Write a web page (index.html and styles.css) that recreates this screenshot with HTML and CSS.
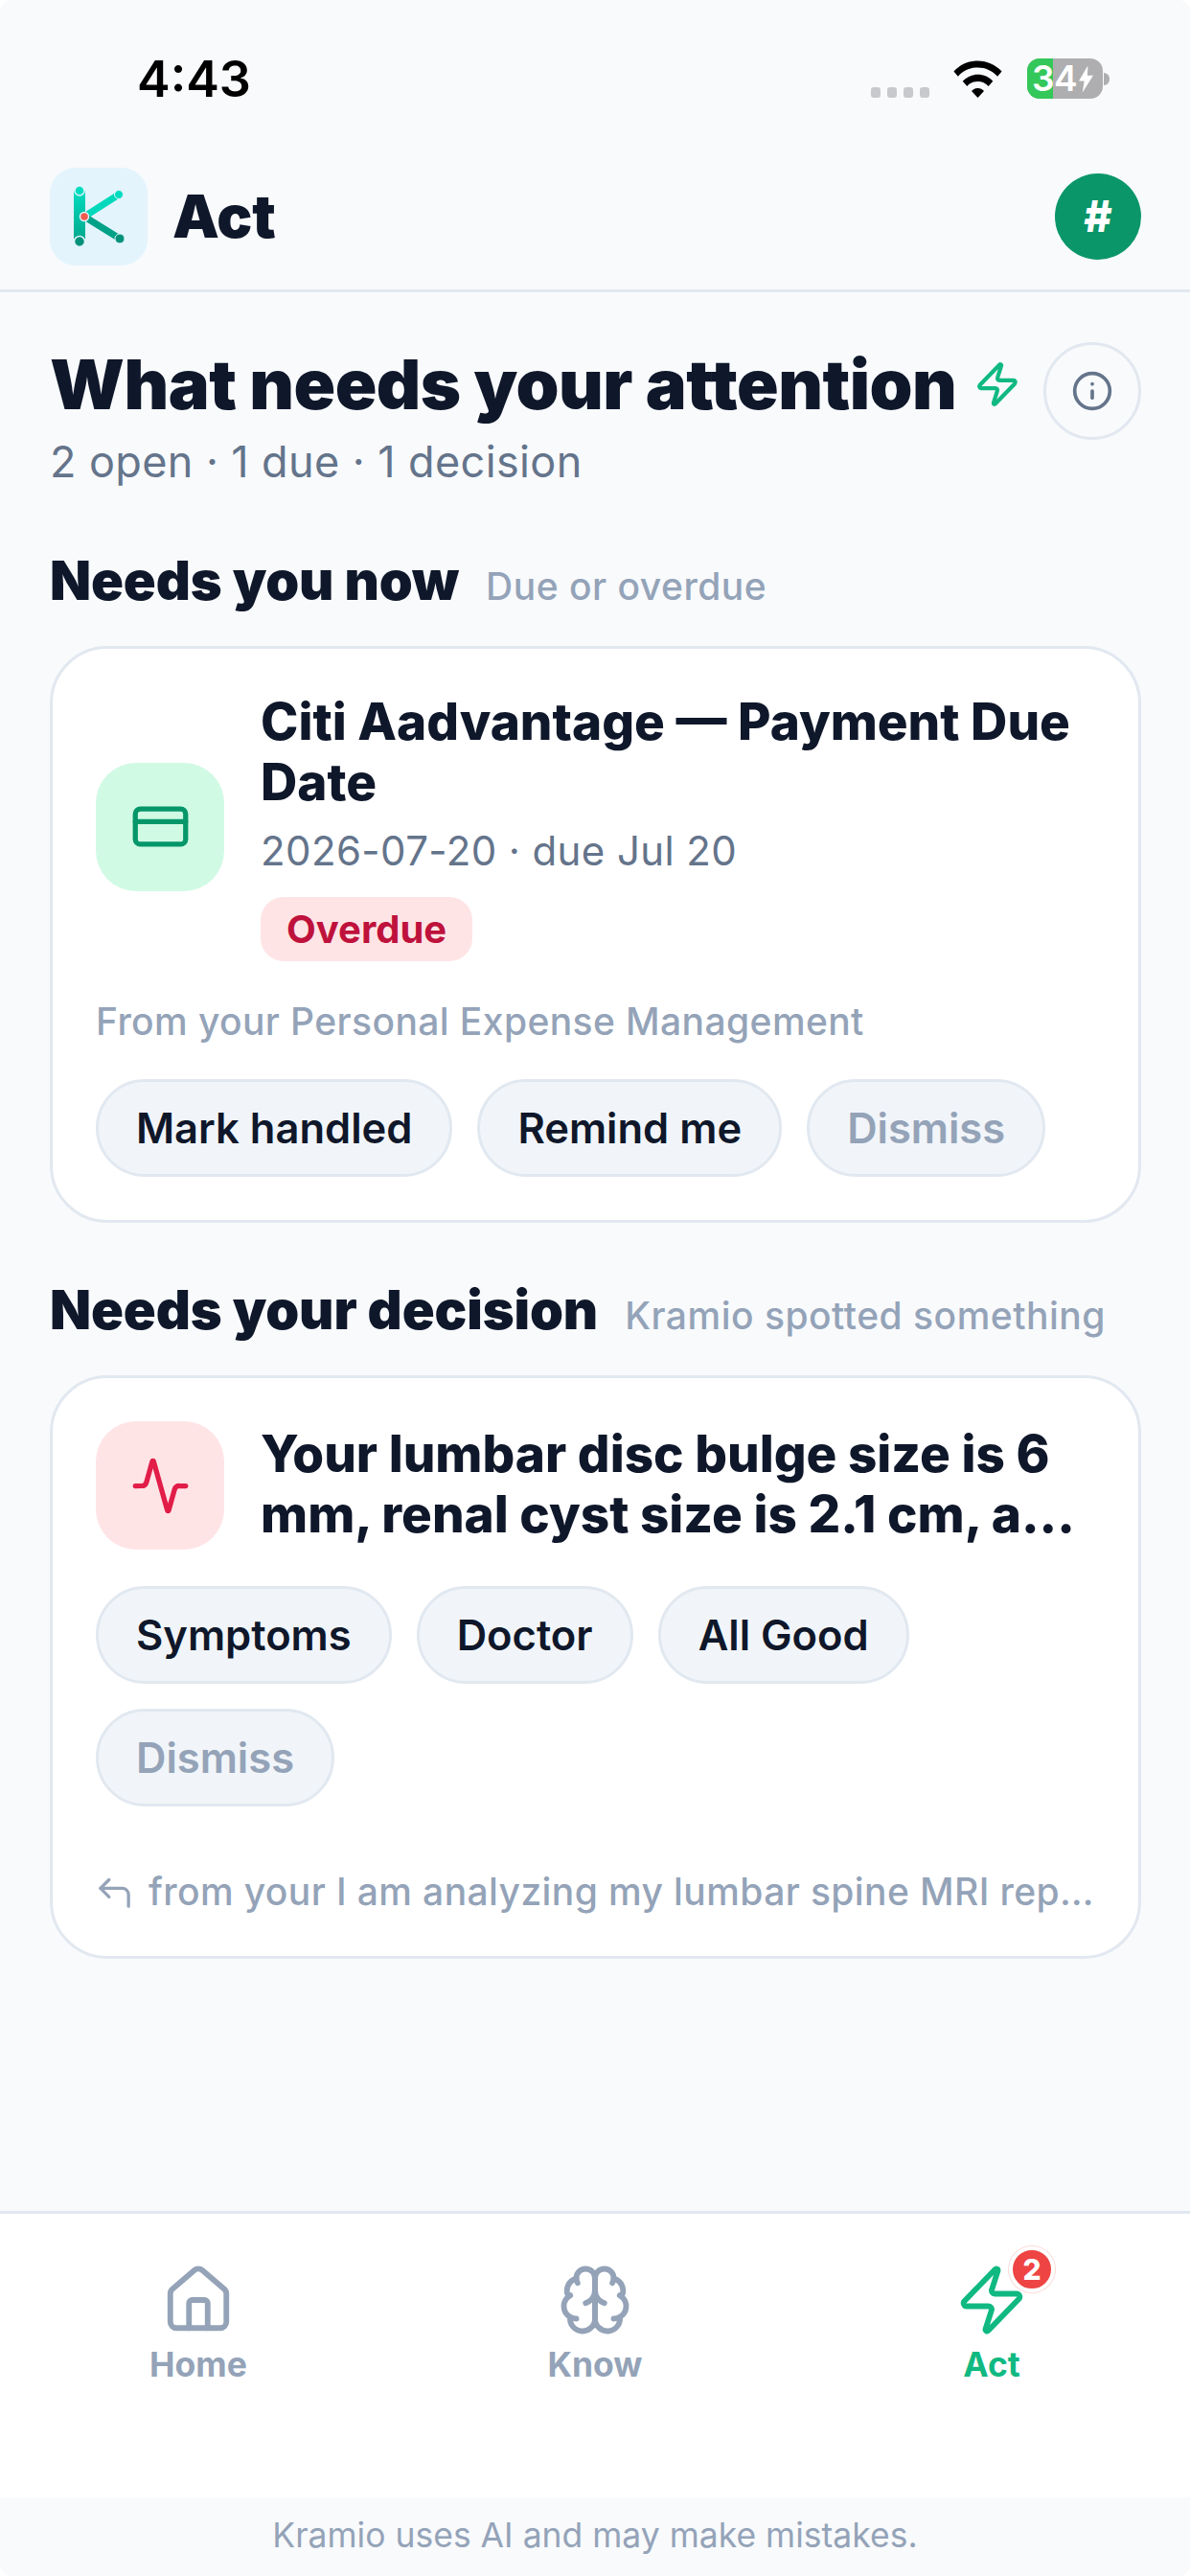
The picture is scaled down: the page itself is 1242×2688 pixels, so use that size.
FILE: index.html
```html
<!DOCTYPE html>
<html lang="en">
<head>
    <meta charset="UTF-8">
    <meta name="viewport" content="width=device-width, initial-scale=1.0">
    <title>Act</title>
    <link rel="stylesheet" href="styles.css">
</head>
<body>

<div class="app">
    <div class="status-bar">
        <span class="status-time">4:43</span>
        <div class="status-icons">
            <div class="signal"><i></i><i></i><i></i><i></i></div>
            <svg class="wifi" viewBox="0 0 54 42">
                <path d="M0 12.5C7 4.8 16.5 0.5 27 0.5S47 4.8 54 12.5L49.2 18C43.4 11.6 35.6 8 27 8S10.600 11.600 4.800 18Z" fill="#000"/>
                <path d="M10 23.500C14.400 18.600 20.400 16 27 16S39.600 18.600 44 23.500L39 29C36 25.600 31.700 23.600 27 23.600S18 25.600 15 29Z" fill="#000"/>
                <path d="M20 34.500C21.800 32.400 24.300 31.300 27 31.300S32.200 32.400 34 34.500L27 42Z" fill="#000"/>
            </svg>
            <div class="battery">
                <div class="battery-body">
                    <div class="battery-fill"></div>
                    <span class="battery-num">34</span>
                    <svg class="battery-bolt" viewBox="0 0 16 30"><path d="M10 0L0 17h6L4 30 16 11H9.500Z" fill="#fff"/></svg>
                </div>
                <div class="battery-cap"></div>
            </div>
        </div>
    </div>

    <header class="top-bar">
        <div class="logo">
            <svg viewBox="0 0 102 102">
                <defs>
                    <linearGradient id="kgrad" x1="0" y1="0" x2="0" y2="1">
                        <stop offset="0" stop-color="#00dcc0"/>
                        <stop offset="1" stop-color="#00a58a"/>
                    </linearGradient>
                </defs>
                <rect x="25" y="24" width="12" height="54" fill="url(#kgrad)"/>
                <path d="M36 51L72 28" stroke="#00d8bb" stroke-width="7"/>
                <path d="M36 51L73 74" stroke="#00a287" stroke-width="7"/>
                <circle cx="31" cy="24" r="5" fill="#00dcc0" stroke="#e3f4fd" stroke-width="1.500"/>
                <circle cx="31" cy="77" r="5.500" fill="#00917a" stroke="#e3f4fd" stroke-width="1.500"/>
                <circle cx="72" cy="28" r="4.500" fill="#00dcc0" stroke="#e3f4fd" stroke-width="1"/>
                <circle cx="73" cy="74" r="5" fill="#00917a" stroke="#e3f4fd" stroke-width="1"/>
                <circle cx="36" cy="51" r="4.500" fill="#ef5b4c" stroke="#e3f4fd" stroke-width="1.500"/>
            </svg>
        </div>
        <span class="top-title">Act</span>
        <div class="avatar">#</div>
    </header>

    <main class="content">
        <div class="page-head">
            <div class="page-head-text">
                <div class="page-title-row">
                    <h1 class="page-title">What needs your attention</h1>
                    <svg class="icon title-zap" viewBox="0 0 24 24"><path d="M4 14a1 1 0 0 1-.78-1.630l9.900-10.200a.5.5 0 0 1 .86.46l-1.920 6.020A1 1 0 0 0 13 10h7a1 1 0 0 1 .78 1.630l-9.900 10.200a.5.5 0 0 1-.86-.46l1.920-6.020A1 1 0 0 0 11 14z"/></svg>
                </div>
                <p class="page-sub">2 open · 1 due · 1 decision</p>
            </div>
            <div class="info-button">
                <svg class="icon" viewBox="0 0 24 24"><circle cx="12" cy="12" r="10"/><path d="M12 16v-4"/><path d="M12 8h.01"/></svg>
            </div>
        </div>

        <section class="section">
            <div class="section-head">
                <h2 class="section-title">Needs you now</h2>
                <span class="section-note">Due or overdue</span>
            </div>
            <div class="card">
                <div class="card-top">
                    <div class="card-icon card-icon-green">
                        <svg class="icon" viewBox="0 0 24 24"><rect x="2" y="5" width="20" height="14" rx="2"/><path d="M2 10h20"/></svg>
                    </div>
                    <div class="card-body">
                        <div class="card-title">Citi Aadvantage — Payment Due Date</div>
                        <div class="card-meta">2026-07-20 · due Jul 20</div>
                        <span class="badge">Overdue</span>
                    </div>
                </div>
                <div class="card-source">From your Personal Expense Management</div>
                <div class="actions">
                    <span class="pill">Mark handled</span>
                    <span class="pill">Remind me</span>
                    <span class="pill pill-muted">Dismiss</span>
                </div>
            </div>
        </section>

        <section class="section">
            <div class="section-head">
                <h2 class="section-title">Needs your decision</h2>
                <span class="section-note">Kramio spotted something</span>
            </div>
            <div class="card">
                <div class="card-top card-top-start">
                    <div class="card-icon card-icon-red">
                        <svg class="icon" viewBox="0 0 24 24"><path d="M22 12h-2.480a2 2 0 0 0-1.930 1.460l-2.350 8.360a.25.25 0 0 1-.48 0L9.240 2.180a.25.25 0 0 0-.48 0l-2.350 8.360A2 2 0 0 1 4.490 12H2"/></svg>
                    </div>
                    <div class="card-body">
                        <div class="card-title card-title-offset">Your lumbar disc bulge size is 6 mm, renal cyst size is 2.1 cm, a...</div>
                    </div>
                </div>
                <div class="actions actions-decision">
                    <span class="pill">Symptoms</span>
                    <span class="pill">Doctor</span>
                    <span class="pill">All Good</span>
                    <span class="pill pill-muted">Dismiss</span>
                </div>
                <div class="card-origin">
                    <svg class="icon" viewBox="0 0 24 24"><path d="M8.500 4L3 9.500 8.500 15"/><path d="M3 9.500H17a4 4 0 0 1 4 4V21"/></svg>
                    <span class="card-origin-text">from your I am analyzing my lumbar spine MRI rep…</span>
                </div>
            </div>
        </section>
    </main>

    <nav class="tab-bar">
        <div class="tab">
            <svg class="icon" viewBox="0 0 24 24"><path d="M15 21v-8a1 1 0 0 0-1-1h-4a1 1 0 0 0-1 1v8"/><path d="M3 10a2 2 0 0 1 .709-1.528l7-5.999a2 2 0 0 1 2.582 0l7 5.999A2 2 0 0 1 21 10v9a2 2 0 0 1-2 2H5a2 2 0 0 1-2-2z"/></svg>
            <span>Home</span>
        </div>
        <div class="tab">
            <svg class="icon" viewBox="0 0 24 24"><path d="M12 5a3 3 0 1 0-5.997.125 4 4 0 0 0-2.526 5.770 4 4 0 0 0 .556 6.588A4 4 0 1 0 12 18Z"/><path d="M12 5a3 3 0 1 1 5.997.125 4 4 0 0 1 2.526 5.770 4 4 0 0 1-.556 6.588A4 4 0 1 1 12 18Z"/><path d="M15 13a4.500 4.500 0 0 1-3-4 4.500 4.500 0 0 1-3 4"/><path d="M17.599 6.500a3 3 0 0 0 .399-1.375"/><path d="M6.003 5.125A3 3 0 0 0 6.401 6.500"/><path d="M3.477 10.896a4 4 0 0 1 .585-.396"/><path d="M19.938 10.500a4 4 0 0 1 .585.396"/><path d="M6 18a4 4 0 0 1-1.967-.516"/><path d="M19.967 17.484A4 4 0 0 1 18 18"/></svg>
            <span>Know</span>
        </div>
        <div class="tab tab-active">
            <div class="tab-icon-wrap">
                <svg class="icon" viewBox="0 0 24 24"><path d="M4 14a1 1 0 0 1-.78-1.630l9.900-10.200a.5.5 0 0 1 .86.46l-1.920 6.020A1 1 0 0 0 13 10h7a1 1 0 0 1 .78 1.630l-9.900 10.200a.5.5 0 0 1-.86-.46l1.920-6.020A1 1 0 0 0 11 14z"/></svg>
                <span class="tab-badge">2</span>
            </div>
            <span>Act</span>
        </div>
    </nav>

    <footer class="disclaimer">Kramio uses AI and may make mistakes.</footer>
</div>

</body>
</html>
```

FILE: styles.css
```css
* {
    box-sizing: border-box;
}
html, body {
    margin: 0;
    padding: 0;
    background: #fff;
}
body {
    font-family: Inter, "Noto Sans", sans-serif;
    color: #0f172a;
}
.app {
    width: 1242px;
    height: 2688px;
    display: flex;
    flex-direction: column;
    background: #f8fafc;
    border-radius: 12px;
    overflow: hidden;
}
.icon {
    fill: none;
    stroke: currentColor;
    stroke-width: 2;
    stroke-linecap: round;
    stroke-linejoin: round;
}

/* status bar */
.status-bar {
    height: 175px;
    flex: none;
    display: flex;
    justify-content: space-between;
    align-items: flex-start;
    padding: 51px 84px 0 143px;
}
.status-time {
    font-size: 52px;
    font-weight: 600;
    line-height: 64px;
    color: #000;
}
.status-icons {
    display: flex;
    align-items: flex-start;
    padding-top: 10px;
}
.signal {
    display: flex;
    gap: 7px;
    margin-top: 30px;
    margin-right: 24px;
}
.signal i {
    width: 10px;
    height: 11px;
    border-radius: 3px;
    background: #c7c9cc;
}
.wifi {
    width: 53px;
    height: 39px;
    margin-top: 2px;
    margin-right: 25px;
}
.battery {
    display: flex;
    align-items: center;
}
.battery-body {
    position: relative;
    width: 79px;
    height: 42px;
    border-radius: 13px;
    background: #aeaeb0;
    display: flex;
    align-items: center;
    padding-left: 5px;
    color: #fff;
}
.battery-fill {
    position: absolute;
    left: 0;
    top: 0;
    bottom: 0;
    width: 27px;
    border-radius: 13px 0 0 13px;
    background: #34c759;
}
.battery-num {
    position: relative;
    font-size: 37px;
    font-weight: 600;
    letter-spacing: -0.5px;
    line-height: 42px;
}
.battery-bolt {
    position: relative;
    width: 15px;
    height: 29px;
    margin-left: 2px;
}
.battery-cap {
    width: 6px;
    height: 13px;
    margin-left: 1px;
    border-radius: 0 6px 6px 0;
    background: #aeaeb0;
}

/* top bar */
.top-bar {
    height: 130px;
    flex: none;
    display: flex;
    align-items: flex-start;
    padding: 0 51px 0 52px;
    border-bottom: 3px solid #e2e8f0;
}
.logo {
    width: 102px;
    height: 102px;
    border-radius: 27px;
    background: #e3f4fd;
}
.logo svg {
    display: block;
    width: 102px;
    height: 102px;
}
.top-title {
    margin-left: 26px;
    font-size: 61.5px;
    font-weight: 900;
    line-height: 102px;
}
.avatar {
    width: 90px;
    height: 90px;
    margin-top: 6px;
    margin-left: auto;
    border-radius: 50%;
    background: #0a9669;
    color: #fff;
    font-size: 45px;
    font-weight: 800;
    line-height: 90px;
    text-align: center;
}

/* content */
.content {
    flex: 1;
    padding: 51px 51px 0 52px;
}
.page-head {
    display: flex;
    justify-content: space-between;
    align-items: flex-start;
}
.page-title-row {
    display: flex;
    align-items: center;
}
.page-title {
    margin: 0;
    font-size: 72px;
    font-weight: 900;
    line-height: 90px;
    letter-spacing: -0.5px;
}
.title-zap {
    width: 50px;
    height: 50px;
    margin-left: 18px;
    color: #10b981;
}
.page-sub {
    margin: 9px 0 0;
    font-size: 45px;
    line-height: 54px;
    letter-spacing: 0.4px;
    color: #64748b;
}
.info-button {
    width: 102px;
    height: 102px;
    margin-top: 1px;
    flex: none;
    display: flex;
    align-items: center;
    justify-content: center;
    border: 3px solid #e2e8f0;
    border-radius: 50%;
    color: #64748b;
}
.info-button svg {
    width: 44px;
    height: 44px;
}
.section {
    margin-top: 64px;
}
.section + .section {
    margin-top: 58px;
}
.section-head {
    display: flex;
    align-items: baseline;
    margin-bottom: 35px;
}
.section-title {
    margin: 0;
    font-size: 56px;
    font-weight: 900;
    line-height: 66px;
    letter-spacing: -0.1px;
}
.section-note {
    margin-left: 28px;
    font-size: 39px;
    font-weight: 500;
    letter-spacing: 0.5px;
    color: #94a3b8;
}

/* cards */
.card {
    background: #fff;
    border: 3px solid #e2e8f0;
    border-radius: 60px;
    padding: 45px;
}
.card-top {
    display: flex;
    align-items: center;
}
.card-top-start {
    align-items: flex-start;
}
.card-icon {
    width: 134px;
    height: 134px;
    flex: none;
    display: flex;
    align-items: center;
    justify-content: center;
    border-radius: 42px;
}
.card-icon svg {
    width: 63px;
    height: 63px;
}
.card-icon-green {
    background: #d1fae5;
    color: #059669;
}
.card-icon-red {
    background: #ffe4e6;
    color: #e11d48;
}
.card-body {
    flex: 1;
    min-width: 0;
    margin-left: 38px;
}
.card-title {
    font-size: 53px;
    font-weight: 800;
    line-height: 63px;
}
.card-title-offset {
    margin-top: 3px;
}
.card-meta {
    margin-top: 13px;
    font-size: 42px;
    line-height: 54px;
    letter-spacing: 0.4px;
    color: #64748b;
}
.badge {
    display: block;
    width: fit-content;
    margin-top: 21px;
    padding: 0 27px;
    border-radius: 24px;
    background: #ffe4e6;
    color: #be123c;
    font-size: 40px;
    font-weight: 700;
    line-height: 67px;
}
.card-source {
    margin-top: 39px;
    font-size: 39px;
    font-weight: 500;
    line-height: 48px;
    letter-spacing: 0.4px;
    color: #94a3b8;
}
.actions {
    display: flex;
    flex-wrap: wrap;
    gap: 26px;
    margin-top: 36px;
}
.actions-decision {
    margin-top: 38px;
}
.pill {
    height: 102px;
    padding: 0 39px;
    display: flex;
    align-items: center;
    border: 3px solid #e2e8f0;
    border-radius: 51px;
    background: #f1f5f9;
    font-size: 43.5px;
    font-weight: 600;
}
.pill-muted {
    color: #94a3b8;
}
.card-origin {
    display: flex;
    align-items: center;
    margin-top: 65px;
    margin-bottom: -2px;
    color: #94a3b8;
}
.card-origin svg {
    width: 39px;
    height: 39px;
    flex: none;
}
.card-origin-text {
    margin-left: 16px;
    white-space: nowrap;
    font-size: 39px;
    font-weight: 500;
    line-height: 48px;
    letter-spacing: 0.4px;
}

/* tab bar */
.tab-bar {
    height: 299px;
    flex: none;
    display: flex;
    padding-top: 51px;
    background: #fff;
    border-top: 3px solid #e2e8f0;
}
.tab {
    flex: 1;
    display: flex;
    flex-direction: column;
    align-items: center;
    color: #94a3b8;
    font-size: 35.5px;
    font-weight: 700;
    line-height: 42px;
}
.tab svg {
    display: block;
    width: 78px;
    height: 78px;
    margin-bottom: 8px;
    stroke-width: 1.8;
}
.tab-active {
    color: #10b981;
}
.tab-icon-wrap {
    position: relative;
}
.tab-badge {
    position: absolute;
    top: -17px;
    left: 57px;
    width: 48px;
    height: 48px;
    border: 4px solid #fff;
    border-radius: 50%;
    background: #ef4444;
    box-shadow: 0 0 0 1px rgba(239, 68, 68, 0.2);
    color: #fff;
    font-size: 30px;
    font-weight: 800;
    line-height: 40px;
    text-align: center;
}
.disclaimer {
    height: 82px;
    flex: none;
    font-size: 35.5px;
    line-height: 80px;
    text-align: center;
    color: #94a3b8;
}
```
